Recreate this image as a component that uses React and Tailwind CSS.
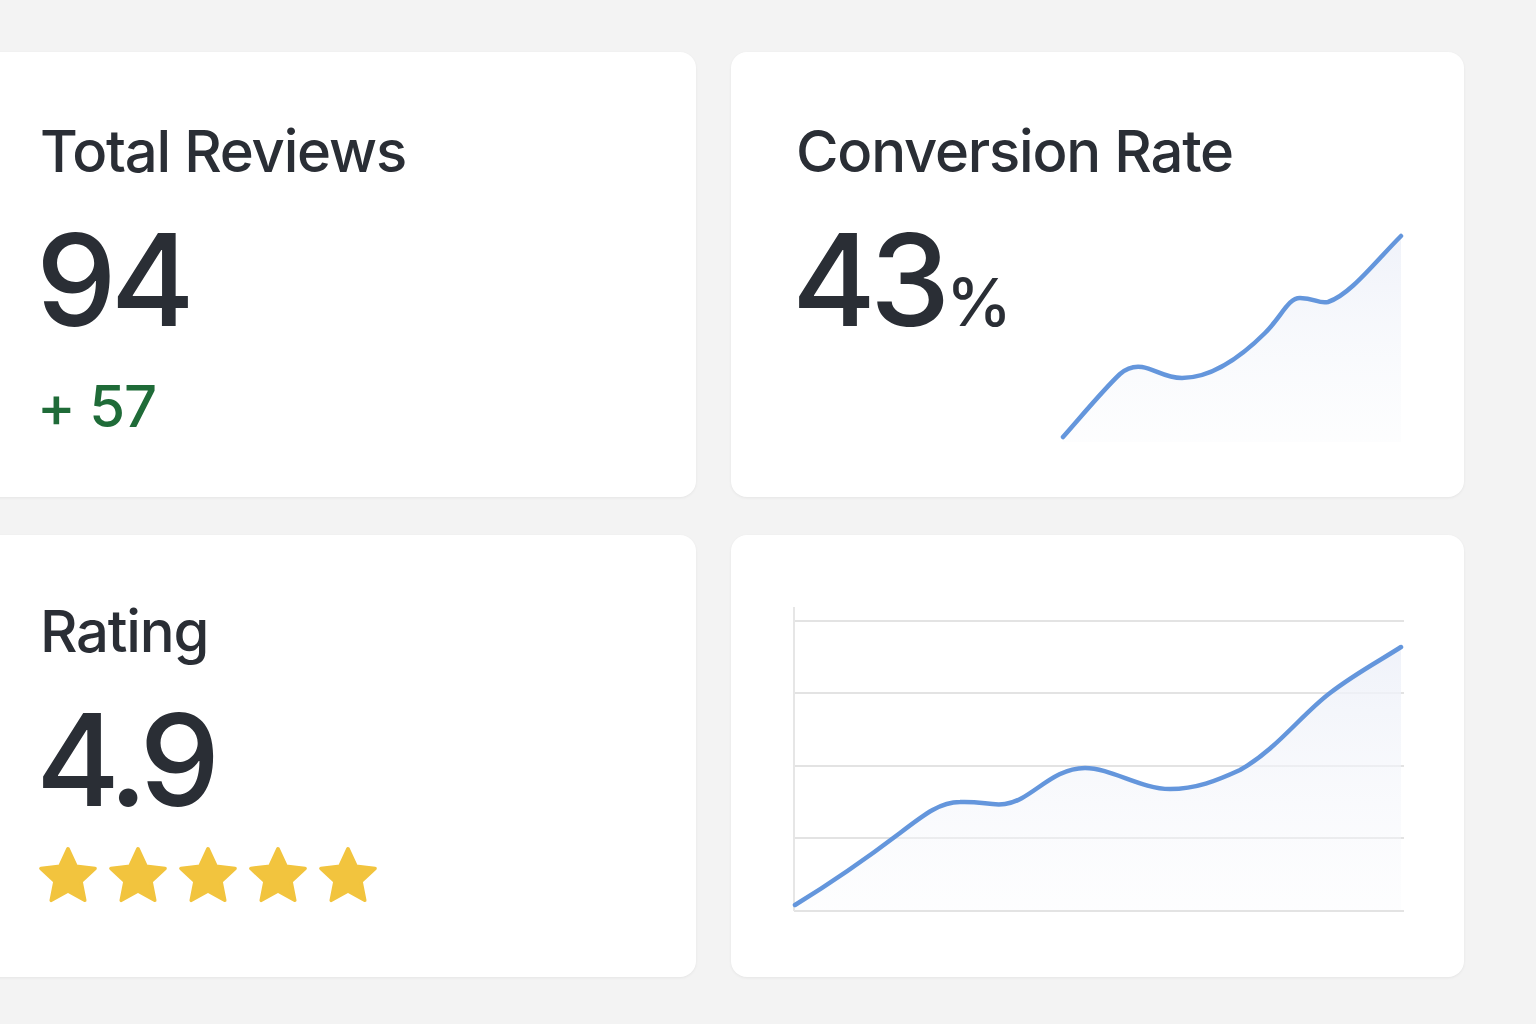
import React from "react";

const font = { fontFamily: "Inter, 'Noto Sans', sans-serif" };

// five-point star, corners softened with a round stroke
const Star = () => (
  <svg width="62" height="62" viewBox="0 0 24 24">
    <path
      d="M12 1.5L15.12 8.21 22.46 9.1 17.04 14.14 18.47 21.4 12 17.8 5.53 21.4 6.96 14.14 1.54 9.1 8.88 8.21Z"
      fill="#f2c43e"
      stroke="#f2c43e"
      strokeWidth="1.4"
      strokeLinejoin="round"
    />
  </svg>
);

const Sparkline = () => {
  const line =
    "M3,207 C25,182 45,158 60,144 C68,137 75,136 82,137 C95,139 105,148 122,148 C150,148 180,128 205,103 C222,86 228,68 240,68 C255,68 258,74 268,72 C290,65 315,32 341,6";
  return (
    <svg width="344" height="214" viewBox="0 0 344 214">
      <defs>
        <linearGradient id="sparkFill" x1="0" y1="0" x2="0" y2="1">
          <stop offset="0" stopColor="#eef1f9" stopOpacity="0.9" />
          <stop offset="1" stopColor="#f8f9fc" stopOpacity="0.3" />
        </linearGradient>
      </defs>
      <path d={`${line} L341,212 L3,212 Z`} fill="url(#sparkFill)" />
      <path d={line} fill="none" stroke="#6496dc" strokeWidth="4.5" strokeLinecap="round" />
    </svg>
  );
};

const TrendChart = () => {
  const line =
    "M4,300 C40,278 80,250 109,228 C135,208 150,197 169,197 C190,196 200,201 214,199 C240,196 260,163 294,163 C320,163 350,184 379,184 C405,184 425,176 449,165 C485,145 510,110 539,88 C565,68 590,55 610,42";
  const grid = [16, 88, 161, 233, 306];
  return (
    <svg width="614" height="310" viewBox="0 0 614 310">
      <defs>
        <linearGradient id="trendFill" x1="0" y1="0" x2="0" y2="1">
          <stop offset="0" stopColor="#eef1f9" stopOpacity="0.9" />
          <stop offset="1" stopColor="#f8f9fc" stopOpacity="0.3" />
        </linearGradient>
      </defs>
      {grid.map((y) => (
        <line key={y} x1="3" x2="613" y1={y} y2={y} stroke="#e3e3e3" strokeWidth="2" />
      ))}
      <line x1="3" x2="3" y1="2" y2="306" stroke="#e6e6e6" strokeWidth="2" />
      <path d={`${line} L610,305 L4,305 Z`} fill="url(#trendFill)" />
      <path d={line} fill="none" stroke="#6496dc" strokeWidth="4.5" strokeLinecap="round" />
    </svg>
  );
};

export default function App() {
  return (
    <div className="min-h-screen w-[1536px] h-[1024px] overflow-hidden bg-[#f3f3f3] text-[#2a2e35]" style={font}>
      <div className="ml-[-30px] pt-[52px] grid grid-cols-[726px_733px] grid-rows-[445px_442px] gap-x-[35px] gap-y-[38px]">
        {/* Total Reviews */}
        <div className="bg-white rounded-2xl shadow-[0_1px_3px_rgba(0,0,0,0.06)] pl-[70px] pt-[70px] flex flex-col">
          <div className="text-[58px] leading-none font-medium tracking-[-1.2px]">Total Reviews</div>
          <div className="mt-[36px] ml-[-4px] text-[128px] leading-none font-medium tracking-[-6px]">94</div>
          <div className="mt-[33px] ml-[-3px] text-[58px] leading-none font-medium tracking-[-1px] text-[#1f6b38]">+ 57</div>
        </div>

        {/* Conversion Rate */}
        <div className="bg-white rounded-2xl shadow-[0_1px_3px_rgba(0,0,0,0.06)] pl-[65px] pr-[60px] pt-[70px] flex flex-col">
          <div className="text-[58px] leading-none font-medium tracking-[-1.2px]">Conversion Rate</div>
          <div className="mt-[36px] flex justify-between items-start">
            <div className="ml-[-4px] flex items-baseline leading-none font-medium">
              <span className="text-[128px] tracking-[-6px]">43</span>
              <span className="text-[66px] ml-[2px]">%</span>
            </div>
            <div className="mt-[14px]">
              <Sparkline />
            </div>
          </div>
        </div>

        {/* Rating */}
        <div className="bg-white rounded-2xl shadow-[0_1px_3px_rgba(0,0,0,0.06)] pl-[70px] pt-[67px] flex flex-col">
          <div className="text-[58px] leading-none font-medium tracking-[-1.2px]">Rating</div>
          <div className="mt-[36px] ml-[-4px] text-[128px] leading-none font-medium tracking-[-7px]">4.9</div>
          <div className="mt-[21px] ml-[-3px] flex gap-[8px]">
            {[0, 1, 2, 3, 4].map((i) => (
              <Star key={i} />
            ))}
          </div>
        </div>

        {/* Trend chart */}
        <div className="bg-white rounded-2xl shadow-[0_1px_3px_rgba(0,0,0,0.06)] pl-[60px] pt-[70px]">
          <TrendChart />
        </div>
      </div>
    </div>
  );
}
